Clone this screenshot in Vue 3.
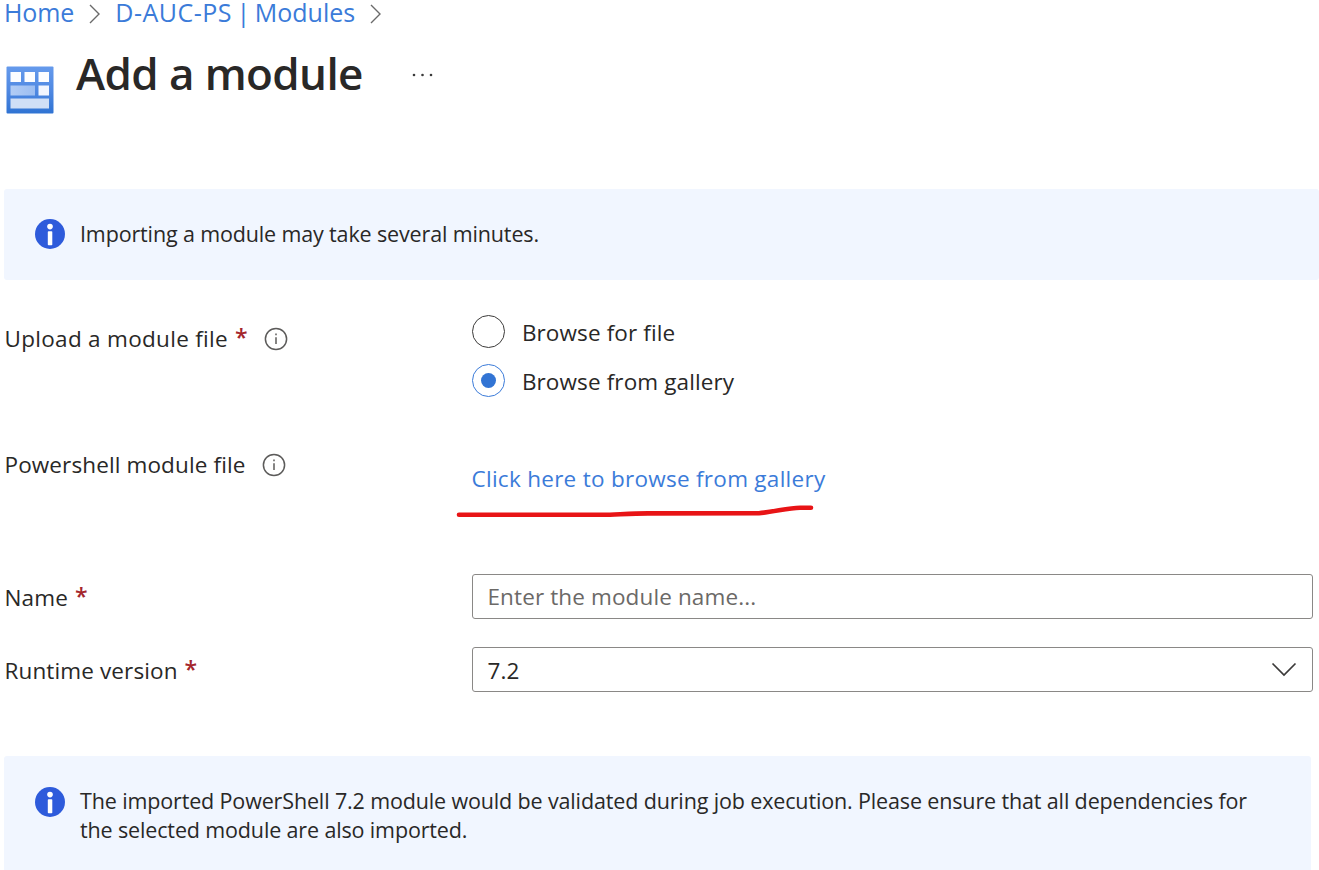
<script setup>
import { ref } from 'vue'

const source = ref('gallery')
const sources = [
  { id: 'file', label: 'Browse for file' },
  { id: 'gallery', label: 'Browse from gallery' },
]
</script>

<template>
  <main class="page">
    <nav class="crumbs">
      <a class="home">Home</a>
      <svg class="sep" width="12" height="20" viewBox="0 0 12 20"><path d="M1 1 L10 10 L1 19" /></svg>
      <a class="parent"><span class="account">D-AUC-PS</span> | Modules</a>
      <svg class="sep" width="12" height="20" viewBox="0 0 12 20"><path d="M1 1 L10 10 L1 19" /></svg>
    </nav>

    <header class="head">
      <svg class="logo" width="48" height="48" viewBox="0 0 48 48">
        <defs>
          <linearGradient id="tile" x1="0" y1="0" x2="0" y2="1">
            <stop offset="0" stop-color="#659aec" />
            <stop offset="0.5" stop-color="#5089e2" />
            <stop offset="1" stop-color="#2f73d3" />
          </linearGradient>
          <linearGradient id="wide" x1="0" y1="0" x2="1" y2="0">
            <stop offset="0" stop-color="#b1ccf5" />
            <stop offset="1" stop-color="#9bbdf1" />
          </linearGradient>
        </defs>
        <rect x="0.5" y="0.5" width="47" height="47" rx="1" fill="url(#tile)" />
        <rect x="4.5" y="6" width="10.5" height="10" fill="#fcfdff" />
        <rect x="18.5" y="6" width="10.5" height="10" fill="#fcfdff" />
        <rect x="32.5" y="6" width="10.5" height="10" fill="#fcfdff" />
        <rect x="4.5" y="19.5" width="24.5" height="10" fill="url(#wide)" />
        <rect x="32.5" y="19.5" width="10.5" height="10" fill="#f1f5fe" />
        <rect x="4.5" y="32.5" width="38.5" height="10" fill="#d0dff6" />
      </svg>
      <h1>Add a module</h1>
      <svg class="more" width="22" height="4" viewBox="0 0 22 4">
        <circle cx="2" cy="2" r="1.3" /><circle cx="10.5" cy="2" r="1.3" /><circle cx="19" cy="2" r="1.3" />
      </svg>
    </header>

    <section class="banner first">
      <svg class="badge" width="30" height="30" viewBox="0 0 30 30">
        <circle cx="15" cy="15" r="15" fill="#2e5bdb" />
        <circle cx="15" cy="7.6" r="2.8" fill="#fff" />
        <rect x="12.8" y="12.3" width="4.5" height="14" rx="0.8" fill="#fff" />
      </svg>
      <p>Importing a module may take several minutes.</p>
    </section>

    <form class="form" @submit.prevent>
      <div class="row upload">
        <div class="label">
          <span class="t-upload">Upload a module file</span><span class="star">*</span>
          <svg class="hint" width="24" height="24" viewBox="0 0 24 24">
            <circle cx="12" cy="12" r="10.6" /><path d="M12 10.2 V17" /><path d="M12 6.4 V8.2" />
          </svg>
        </div>
        <div class="radios">
          <label v-for="s in sources" :key="s.id" class="radio" :class="{ on: source === s.id }" @click="source = s.id">
            <span class="ring"></span><span class="caption">{{ s.label }}</span>
          </label>
        </div>
      </div>

      <div class="row module">
        <div class="label">
          <span>Powershell module file</span>
          <svg class="hint" width="24" height="24" viewBox="0 0 24 24">
            <circle cx="12" cy="12" r="10.6" /><path d="M12 10.2 V17" /><path d="M12 6.4 V8.2" />
          </svg>
        </div>
        <div class="pick">
          <a>Click here to browse from gallery</a>
          <svg class="stroke" width="360" height="14" viewBox="0 0 360 14">
            <path d="M3 9.8 L147 9.8 C160 9.6 175 8.4 192 8.4 L303 8.2 C320 6.5 332 2.7 344 2.7 L355 2.7" />
          </svg>
        </div>
      </div>

      <div class="row field">
        <div class="label"><span>Name</span><span class="star">*</span></div>
        <div class="box"><span class="placeholder">Enter the module name...</span></div>
      </div>

      <div class="row field runtime">
        <div class="label"><span>Runtime version</span><span class="star">*</span></div>
        <div class="box">
          <span class="value">7.2</span>
          <svg class="chev" width="26" height="16" viewBox="0 0 26 16"><path d="M1.5 1.5 L13 13 L24.5 1.5" /></svg>
        </div>
      </div>
    </form>

    <section class="banner second">
      <svg class="badge" width="30" height="30" viewBox="0 0 30 30">
        <circle cx="15" cy="15" r="15" fill="#2e5bdb" />
        <circle cx="15" cy="7.6" r="2.8" fill="#fff" />
        <rect x="12.8" y="12.3" width="4.5" height="14" rx="0.8" fill="#fff" />
      </svg>
      <p>
        The imported PowerShell 7.2 module would be validated during job execution. Please ensure that all dependencies for<br />
        the selected module are also imported.
      </p>
    </section>
  </main>
</template>

<style>
body {
  margin: 0;
  background: #fff;
}
</style>

<style scoped>
.page {
  width: 1319px;
  height: 870px;
  overflow: hidden;
  display: flex;
  flex-direction: column;
  background: #fff;
  color: #292827;
  font-family: 'Open Sans', 'Noto Sans', sans-serif;
  font-size: 22.5px;
  line-height: 28px;
  letter-spacing: 0.12px;
  white-space: nowrap;
}
.crumbs {
  display: flex;
  align-items: center;
  height: 26px;
  padding-left: 4px;
  font-size: 25px;
  line-height: 24px;
  letter-spacing: 0;
  color: #3b7bd9;
}
.crumbs a {
  margin-bottom: 2px;
}
.home {
  letter-spacing: -0.1px;
}
.parent {
  word-spacing: -2px;
}
.account {
  letter-spacing: 0.5px;
}
.sep {
  margin: 1px 14px 0 15px;
  fill: none;
  stroke: #6a6a6a;
  stroke-width: 1.4;
}
.head {
  display: flex;
  align-items: flex-start;
  height: 145px;
  padding: 18px 0 0 6px;
  box-sizing: border-box;
  margin-bottom: 18px;
}
.logo {
  margin-top: 22px;
}
h1 {
  margin: 0 0 0 22px;
  font-size: 44px;
  line-height: 58px;
  font-weight: 600;
  letter-spacing: -0.6px;
}
.more {
  margin: 29px 0 0 49px;
  fill: #3a3a3a;
}
.banner {
  display: flex;
  margin-left: 4px;
  padding-left: 31px;
  background: #f1f6ff;
  border-radius: 3px;
  box-sizing: border-box;
  font-size: 21.5px;
  letter-spacing: -0.14px;
}
.banner p {
  margin: 1px 0 0 15px;
}
.first {
  height: 91px;
  padding-top: 30px;
}
.badge {
  flex: none;
}
.second {
  width: 1307px;
  flex: 1;
  padding-top: 31px;
  border-radius: 3px 3px 0 0;
  line-height: 28.6px;
}
.second p {
  margin-top: 0.4px;
}
.row {
  display: grid;
  grid-template-columns: 467px 841px;
  padding-left: 4.5px;
}
.label {
  display: flex;
  height: 28px;
}
.t-upload {
  letter-spacing: 0.3px;
}
.star {
  margin: -2px 0 0 7px;
  color: #a4262c;
  font-size: 23px;
  font-weight: 600;
}
.hint {
  margin: 2px 0 0 16px;
  fill: none;
  stroke: #5c5b5a;
  stroke-width: 1.5;
}
.upload {
  height: 126px;
  padding-top: 35px;
  box-sizing: border-box;
}
.upload .label {
  margin-top: 10px;
}
.radio {
  display: flex;
  align-items: center;
  height: 33px;
  margin-bottom: 16px;
}
.caption,
.value {
  margin-top: 2px;
}
.ring {
  display: grid;
  place-items: center;
  width: 33px;
  height: 33px;
  margin: 0 17px 0 0.4px;
  border: 1.5px solid #3c3b3a;
  border-radius: 50%;
  box-sizing: border-box;
}
.on .ring {
  border-color: #3b7bd9;
}
.on .ring::after {
  content: '';
  width: 15px;
  height: 15px;
  border-radius: 50%;
  background: #3274d4;
}
.module {
  height: 168px;
  padding-top: 45px;
  box-sizing: border-box;
}
.pick {
  position: relative;
  padding-top: 14px;
}
.pick a {
  color: #3b7bd9;
  letter-spacing: 0.28px;
}
.stroke {
  position: absolute;
  left: -15.5px;
  top: 54px;
  fill: none;
  stroke: #e81416;
  stroke-width: 4.6;
  stroke-linecap: round;
  stroke-linejoin: round;
}
.field .label {
  margin-top: 10px;
}
.box {
  display: flex;
  align-items: center;
  height: 45px;
  padding: 0 15px;
  border: 1px solid #8a8886;
  border-radius: 3px;
  box-sizing: border-box;
}
.placeholder {
  color: #6b6967;
}
.runtime {
  margin-top: 28px;
  margin-bottom: 64px;
}
.chev {
  margin-left: auto;
  fill: none;
  stroke: #3b3a39;
  stroke-width: 1.7;
}
</style>
